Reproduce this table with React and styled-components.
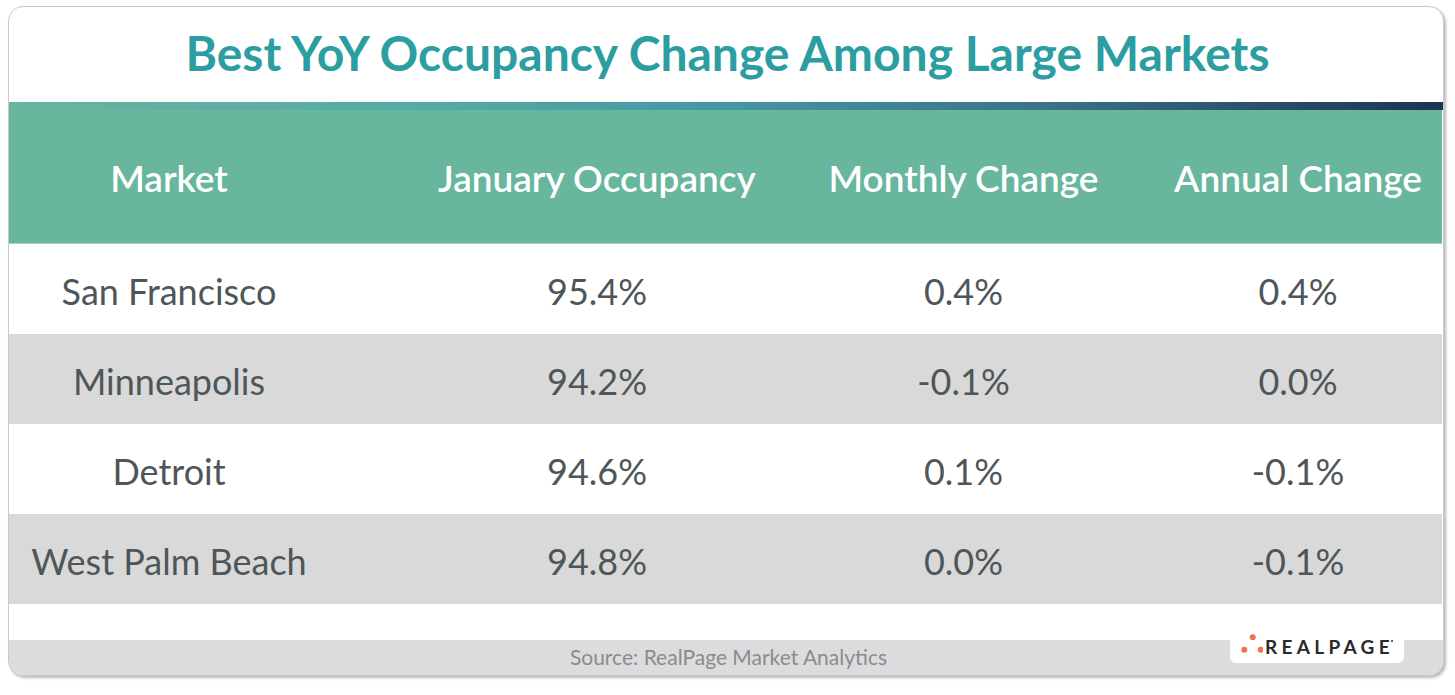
import React from "react";
import styled, { createGlobalStyle } from "styled-components";

const GlobalStyle = createGlobalStyle`
  html, body { margin: 0; padding: 0; background: #ffffff; }
  body { font-family: Lato, "Open Sans", sans-serif; }
  #root { padding: 6px 11px 19px 8px; }
`;

const Card = styled.div`
  position: relative;
  width: 1436px;
  height: 670px;
  box-sizing: border-box;
  background: #ffffff;
  border: 1px solid #c9c9c9;
  border-radius: 15px;
  box-shadow: 2px 2px 3px rgba(0, 0, 0, 0.28);
  overflow: hidden;
  display: flex;
  flex-direction: column;
`;

const Title = styled.h1`
  margin: 0;
  height: 95px;
  display: flex;
  align-items: center;
  justify-content: center;
  padding: 0 0 4px 3px;
  box-sizing: border-box;
  font-family: Lato, sans-serif;
  font-weight: 700;
  font-size: 48px;
  color: #2c9ea1;
  letter-spacing: 0;
`;

const GradientBar = styled.div`
  height: 8px;
  background: linear-gradient(90deg, #67b6a0 0%, #55a9a6 30%, #4597a0 50%, #3a7484 72%, #1c3352 100%);
`;

const Table = styled.div`
  margin-right: 1px;
  display: flex;
  flex-direction: column;
`;

const COLS = "320px 536px 289px 1fr";

const HeaderRow = styled.div`
  display: grid;
  grid-template-columns: ${COLS};
  height: 134px;
  align-items: center;
  background: #68b69e;
  border-bottom: 1px solid #9fd0c0;
  box-sizing: border-box;
  padding-top: 2px;
`;

const Row = styled.div`
  display: grid;
  grid-template-columns: ${COLS};
  height: 90px;
  box-sizing: border-box;
  padding-top: 3px;
  align-items: center;
  background: ${(p) => (p.$shaded ? "#d9d9d9" : "#ffffff")};
`;

const HeadCell = styled.div`
  display: flex;
  justify-content: center;
  white-space: nowrap;
  padding-right: ${(p) => p.$padRight || 0}px;
  font-family: Lato, sans-serif;
  font-weight: 600;
  font-size: 37px;
  color: #ffffff;
`;

const Cell = styled.div`
  display: flex;
  justify-content: center;
  white-space: nowrap;
  padding-right: ${(p) => p.$padRight || 0}px;
  font-family: Lato, sans-serif;
  font-weight: 400;
  font-size: 36px;
  color: #4e5659;
`;

const Spacer = styled.div`
  flex: 1;
`;

const Footer = styled.div`
  position: relative;
  height: 35px;
  background: #dcdcde;
  display: flex;
  align-items: center;
  justify-content: center;
  font-family: Lato, sans-serif;
  font-size: 21px;
  color: #8b8b8b;
  padding: 0 0 3px 5px;
  box-sizing: border-box;
`;

const LogoBox = styled.div`
  position: absolute;
  left: 1221px;
  top: 0;
  width: 174px;
  height: 23px;
  background: #ffffff;
  border-radius: 0 0 6px 6px;
`;

const LogoMark = styled.svg`
  position: absolute;
  left: 5px;
  top: -6px;
`;

const LogoText = styled.span`
  position: absolute;
  left: 35px;
  top: -5px;
  font-family: Lato, sans-serif;
  font-weight: 700;
  font-size: 19px;
  letter-spacing: 4.3px;
  color: #2a2a2e;
  line-height: 24px;
`;

const Reg = styled.span`
  position: absolute;
  right: 1px;
  top: 5px;
  width: 2px;
  height: 2px;
  border-radius: 50%;
  background: #2a2a2e;
`;

const data = [
  ["San Francisco", "95.4%", "0.4%", "0.4%"],
  ["Minneapolis", "94.2%", "-0.1%", "0.0%"],
  ["Detroit", "94.6%", "0.1%", "-0.1%"],
  ["West Palm Beach", "94.8%", "0.0%", "-0.1%"],
];

const headers = ["Market", "January Occupancy", "Monthly Change", "Annual Change"];
const pads = [0, 0, 92, 0];

export default function App() {
  return (
    <>
      <GlobalStyle />
      <Card>
        <Title>Best YoY Occupancy Change Among Large Markets</Title>
        <GradientBar />
        <Table>
          <HeaderRow>
            {headers.map((h, i) => (
              <HeadCell key={h} $padRight={pads[i]}>
                {h}
              </HeadCell>
            ))}
          </HeaderRow>
          {data.map((r, ri) => (
            <Row key={r[0]} $shaded={ri % 2 === 1}>
              {r.map((c, ci) => (
                <Cell key={ci} $padRight={pads[ci]}>
                  {c}
                </Cell>
              ))}
            </Row>
          ))}
        </Table>
        <Spacer />
        <Footer>
          Source: RealPage Market Analytics
          <LogoBox>
            <LogoMark width="28" height="22" viewBox="0 0 28 22">
              <circle cx="17.7" cy="3.2" r="3" fill="#ee7450" />
              <circle cx="9.3" cy="15.8" r="3" fill="#ee7450" />
              <circle cx="25.7" cy="15.8" r="3" fill="#ee7450" />
            </LogoMark>
            <LogoText>
              REALPAGE
              <Reg />
            </LogoText>
          </LogoBox>
        </Footer>
      </Card>
    </>
  );
}
